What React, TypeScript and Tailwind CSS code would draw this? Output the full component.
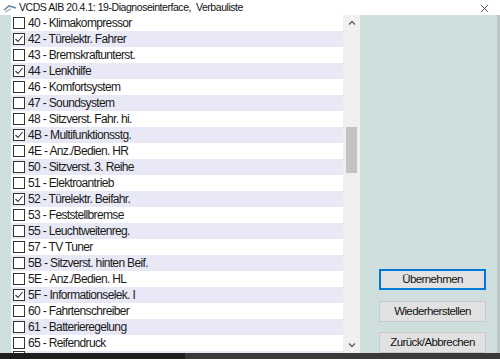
import React from "react";

const items: [string, boolean][] = [
  ["40 - Klimakompressor", false],
  ["42 - Türelektr. Fahrer", true],
  ["43 - Bremskraftunterst.", false],
  ["44 - Lenkhilfe", true],
  ["46 - Komfortsystem", false],
  ["47 - Soundsystem", false],
  ["48 - Sitzverst. Fahr. hi.", false],
  ["4B - Multifunktionsstg.", true],
  ["4E - Anz./Bedien. HR", false],
  ["50 - Sitzverst. 3. Reihe", false],
  ["51 - Elektroantrieb", false],
  ["52 - Türelektr. Beifahr.", true],
  ["53 - Feststellbremse", false],
  ["55 - Leuchtweitenreg.", false],
  ["57 - TV Tuner", false],
  ["5B - Sitzverst. hinten Beif.", false],
  ["5E - Anz./Bedien. HL", false],
  ["5F - Informationselek. I", true],
  ["60 - Fahrtenschreiber", false],
  ["61 - Batterieregelung", false],
  ["65 - Reifendruck", false],
];

function Box({ checked }: { checked: boolean }) {
  return (
    <div className="w-[12px] h-[12px] border border-[#333] bg-white flex items-center justify-center shrink-0">
      {checked && (
        <svg width="10" height="10" viewBox="0 0 10 10">
          <path d="M1.5 5 L4 7.5 L8.5 2" fill="none" stroke="#333" strokeWidth="1.1" />
        </svg>
      )}
    </div>
  );
}

export default function App() {
  return (
    <div
      className="w-[500px] h-[359px] flex flex-col overflow-hidden bg-[#cfdfdd]"
      style={{ fontFamily: '"Liberation Sans", Arial, sans-serif' }}
    >
      <div className="h-[15px] bg-white flex items-center shrink-0 relative">
        <svg width="14" height="10" viewBox="0 0 14 10" className="ml-[3px]">
          <path d="M1 7 L6 3 L13 5" fill="none" stroke="#6a8aa8" strokeWidth="1.6" />
          <path d="M2 9 L8 6" fill="none" stroke="#9aa" strokeWidth="1.2" />
        </svg>
        <span className="ml-[2px] text-[10.5px] leading-none tracking-[-0.45px] text-[#111]">
          VCDS AIB 20.4.1: 19-Diagnoseinterface,&nbsp; Verbauliste
        </span>
        <svg width="9" height="9" viewBox="0 0 10 10" className="absolute left-[480px] top-[4px]">
          <path d="M1 1 L9 9 M9 1 L1 9" stroke="#444" strokeWidth="1" />
        </svg>
      </div>
      <div className="flex-1 flex min-h-0">
        <div className="w-[11px] shrink-0" />
        <div className="w-[349px] flex bg-white shrink-0 min-h-0">
          <div className="flex-1 overflow-hidden">
            {items.map(([label, checked], i) => (
              <div
                key={label}
                className={`h-[16px] flex items-center pl-[2px] ${i % 2 === 1 ? "bg-[#e8e8f6]" : "bg-white"}`}
              >
                <Box checked={checked} />
                <span className="ml-[3px] text-[12px] leading-none tracking-[-0.65px] text-[#1a1a1a]">{label}</span>
              </div>
            ))}
            <div className="h-[16px] flex items-start pl-[2px] bg-[#e8e8f6]">
              <div className="w-[12px] h-[12px] border border-[#333] bg-white" />
            </div>
          </div>
          <div className="w-[17px] bg-[#f0f0f0] flex flex-col items-center shrink-0">
            <div className="h-[16px] flex items-center justify-center">
              <svg width="8" height="6" viewBox="0 0 8 6">
                <path d="M1 4.5 L4 1.5 L7 4.5" fill="none" stroke="#606060" strokeWidth="1.3" />
              </svg>
            </div>
            <div className="h-[96px]" />
            <div className="w-[11px] h-[46px] bg-[#c3c3c3]" />
            <div className="flex-1" />
            <div className="h-[16px] flex items-center justify-center">
              <svg width="8" height="6" viewBox="0 0 8 6">
                <path d="M1 1.5 L4 4.5 L7 1.5" fill="none" stroke="#606060" strokeWidth="1.3" />
              </svg>
            </div>
          </div>
        </div>
        <div className="flex-1 flex flex-col justify-end pl-[19px]">
          <button className="w-[107px] h-[21px] bg-[#e1e1e1] border-2 border-[#0078d7] text-[11.5px] tracking-[-0.6px] text-[#111] flex items-center justify-center">
            Übernehmen
          </button>
          <button className="mt-[11px] w-[107px] h-[21px] bg-[#e1e1e1] border border-[#c8c8c8] text-[11.5px] tracking-[-0.6px] text-[#111] flex items-center justify-center">
            Wiederherstellen
          </button>
          <button className="mt-[10px] w-[107px] h-[21px] bg-[#e1e1e1] border border-[#c8c8c8] text-[11.5px] tracking-[-0.6px] text-[#111] flex items-center justify-center">
            Zurück/Abbrechen
          </button>
        </div>
        <div className="w-[3px] bg-[#b9c6c5] shrink-0" />
      </div>
      <div className="h-[6px] flex shrink-0">
        <div className="w-[185px] bg-[#1e1e1e]" />
        <div className="flex-1 bg-[#3a3a3a]" />
      </div>
    </div>
  );
}
